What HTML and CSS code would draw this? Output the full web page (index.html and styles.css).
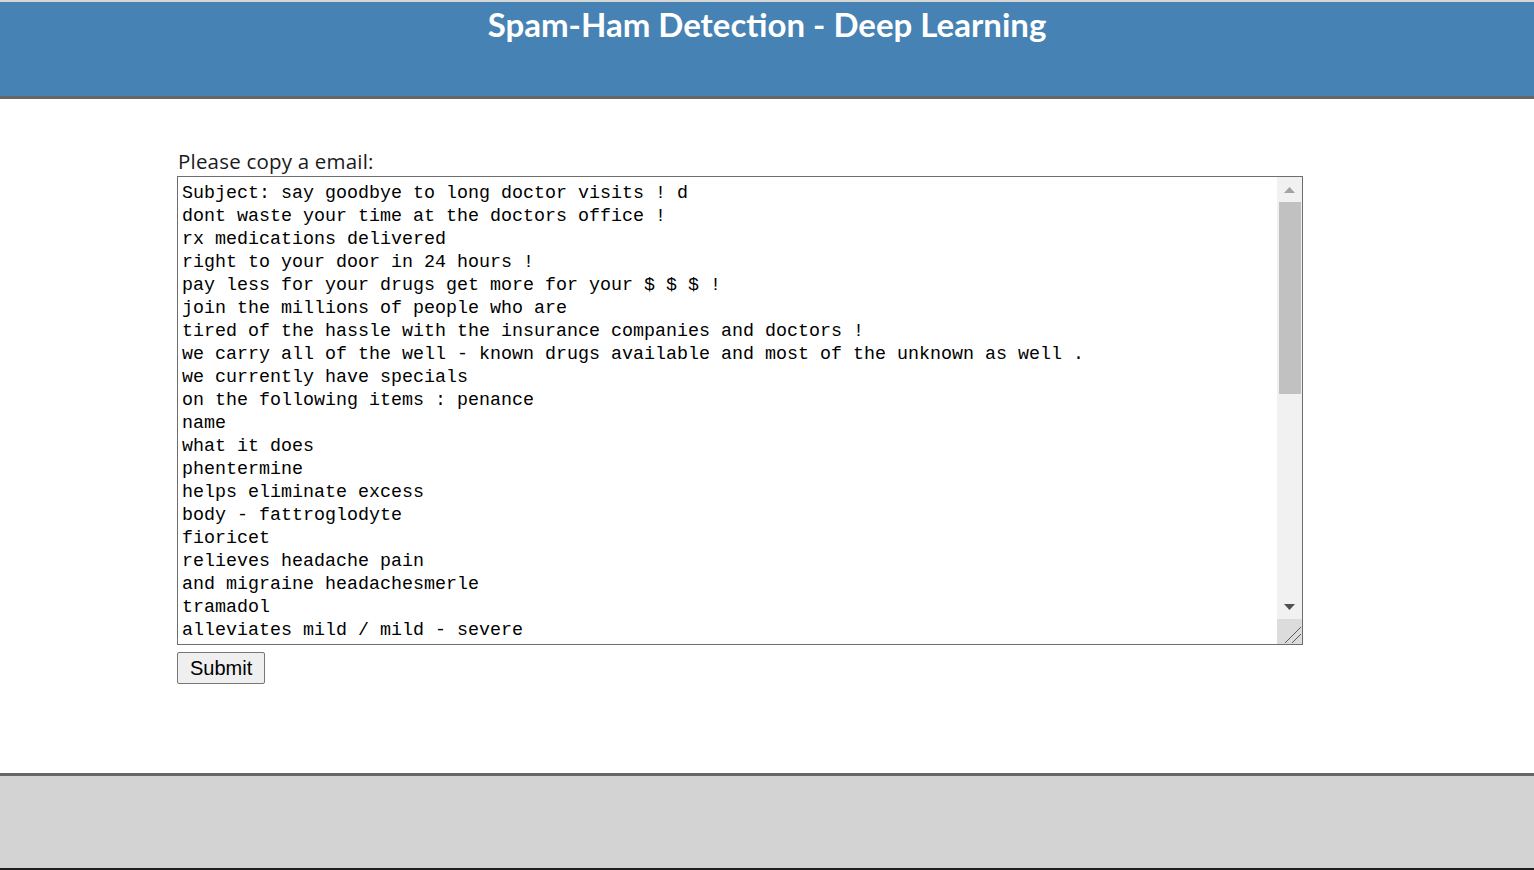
FILE: index.html
```html
<!DOCTYPE html>
<html lang="en">
<head>
<meta charset="utf-8">
<title>Spam-Ham Detection - Deep Learning</title>
<link rel="stylesheet" href="styles.css">
</head>
<body>
<header class="site-header">
  <h1 class="site-title">Spam-Ham Detection - Deep Learning</h1>
</header>
<main class="content">
  <form class="email-form">
    <label class="email-label" for="email">Please copy a email:</label>
    <div class="editor">
      <textarea class="email-input" id="email" name="email" spellcheck="false">Subject: say goodbye to long doctor visits ! d
dont waste your time at the doctors office !
rx medications delivered
right to your door in 24 hours !
pay less for your drugs get more for your $ $ $ !
join the millions of people who are
tired of the hassle with the insurance companies and doctors !
we carry all of the well - known drugs available and most of the unknown as well .
we currently have specials
on the following items : penance
name
what it does
phentermine
helps eliminate excess
body - fattroglodyte
fioricet
relieves headache pain
and migraine headachesmerle
tramadol
alleviates mild / mild - severe
pain
ultram
also alleviates mild / mild - severe
pain
xanax
anxiety relief
soma
alleviates chronic
back pain
valium
anxiety relief
meridia
weight loss
propecia
male pattern hair loss
viagra
male impotence
levitra
male impotence
and many more . . .
order now and save !</textarea>
      <div class="scrollbar" aria-hidden="true">
        <div class="sb-button sb-up">
          <svg width="11" height="6" viewBox="0 0 11 6"><polygon points="0,6 5.5,0 11,6" fill="#a3a3a3"/></svg>
        </div>
        <div class="sb-track">
          <div class="sb-thumb"></div>
        </div>
        <div class="sb-button sb-down">
          <svg width="11" height="6" viewBox="0 0 11 6"><polygon points="0,0 11,0 5.5,6" fill="#505050"/></svg>
        </div>
        <div class="sb-resizer">
          <svg width="25" height="25" viewBox="0 0 25 25"><line x1="8" y1="24" x2="24" y2="8" stroke="#5a5a5a" stroke-width="1"/><line x1="15" y1="24" x2="24" y2="15" stroke="#5a5a5a" stroke-width="1"/></svg>
        </div>
      </div>
    </div>
    <button class="submit-btn" type="submit">Submit</button>
  </form>
</main>
<footer class="site-footer"></footer>
</body>
</html>
```
FILE: styles.css
```css
html, body {
  margin: 0;
  padding: 0;
}

body {
  background: #ffffff;
  font-family: "Open Sans", "Liberation Sans", sans-serif;
  color: #1a1a1a;
}

.site-header {
  background: #4682b4;
  border-top: 2px solid #d6d6d6;
  border-bottom: 3px solid #666666;
  height: 94px;
}

.site-title {
  margin: 0;
  padding-top: 4px;
  text-align: center;
  color: #ffffff;
  font-family: Lato, "Open Sans", sans-serif;
  font-weight: 700;
  font-size: 33px;
  line-height: 36px;
}

.content {
  height: 674px;
  box-sizing: border-box;
  padding: 49px 0 0 177px;
}

.email-form {
  display: flex;
  flex-direction: column;
  align-items: flex-start;
}

.email-label {
  display: block;
  font-size: 20.5px;
  line-height: 26px;
  letter-spacing: 0.2px;
  padding-left: 1px;
  color: #1a1a1a;
}

.editor {
  display: flex;
  box-sizing: border-box;
  width: 1126px;
  height: 469px;
  margin-top: 2px;
  border: 1px solid #6e6e6e;
  background: #ffffff;
}

.email-input {
  flex: 1;
  min-width: 0;
  box-sizing: border-box;
  height: 100%;
  margin: 0;
  padding: 5px 3px 3px 4px;
  border: 0;
  border-radius: 0;
  font-family: "Liberation Mono", "DejaVu Sans Mono", monospace;
  font-size: 18.33px;
  line-height: 23px;
  color: #000000;
  background: #ffffff;
  resize: none;
  overflow: hidden;
  white-space: pre-wrap;
  outline: none;
}

.scrollbar {
  width: 25px;
  flex: none;
  display: flex;
  flex-direction: column;
  background: #f1f1f1;
}

.sb-button {
  display: flex;
  align-items: center;
  justify-content: center;
  flex: none;
}

.sb-up {
  height: 25px;
}

.sb-down {
  height: 24px;
}

.sb-track {
  flex: 1;
  display: flex;
  flex-direction: column;
}

.sb-thumb {
  height: 192px;
  margin: 0 1px 0 2px;
  background: #c1c1c1;
}

.sb-resizer {
  flex: none;
  height: 25px;
  background: #dcdcdc;
  display: flex;
}

.submit-btn {
  margin-top: 7px;
  padding: 4px 12px 3px 12px;
  font-family: "Liberation Sans", Arial, sans-serif;
  font-size: 20px;
  line-height: 23px;
  color: #000000;
  background: #efefef;
  border: 1px solid #767676;
  border-radius: 2px;
}

.site-footer {
  height: 92px;
  background: #d3d3d3;
  border-top: 3px solid #666666;
  border-bottom: 2px solid #1e1e1e;
}
```
